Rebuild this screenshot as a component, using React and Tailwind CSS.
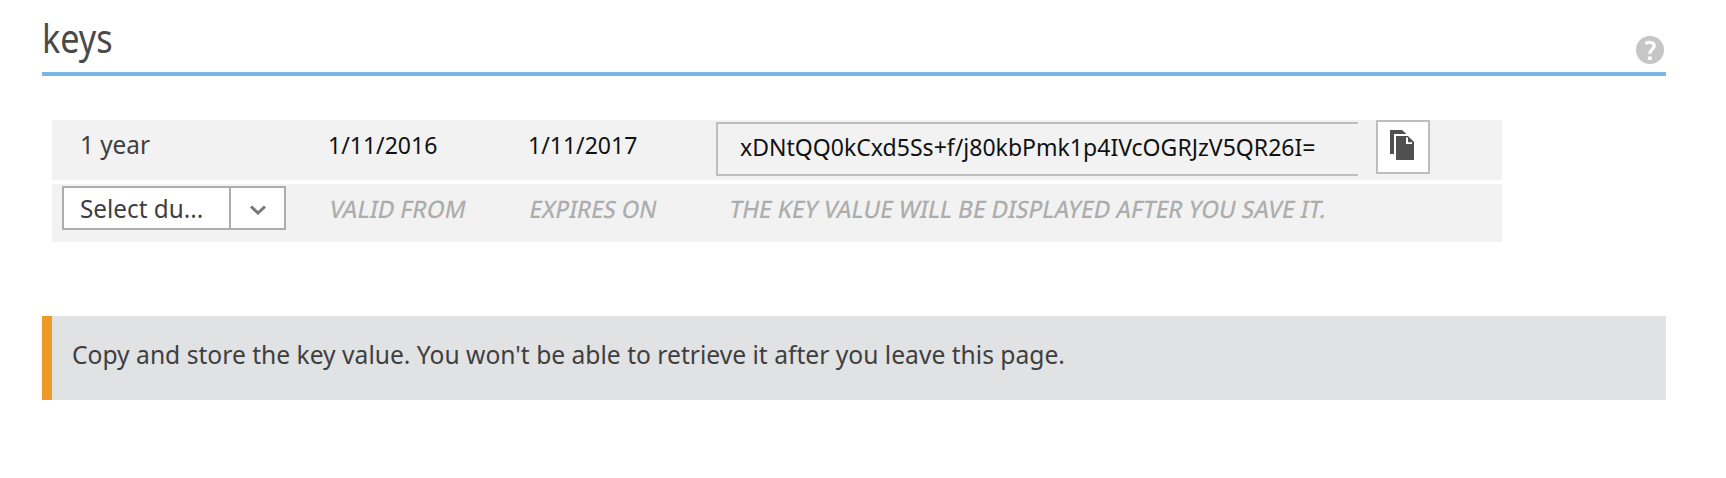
import React from "react";

const run = "block w-max origin-left whitespace-pre";

function CopyIcon() {
  return (
    <svg width="24" height="30" viewBox="0 0 24 30" fill="#505050">
      <path d="M0 0h12l4 3.500v.5H4v20H0z" />
      <path d="M6 6h12l6 6v18H6z" />
      <path d="M16 7.500v6.500h6v-1.700h-4V7.500z" fill="#fff" />
    </svg>
  );
}

function HelpIcon() {
  return (
    <svg width="28" height="28" viewBox="0 0 28 28" fill="none">
      <circle cx="14" cy="14" r="14" fill="#c6c6c6" />
      <path d="M9.3 7.6C12 6 18.2 5.6 18.2 9.8c0 3.600-4.400 3.600-4.400 8" stroke="#fff" strokeWidth="3.200" />
      <rect x="11.800" y="20.500" width="4" height="3.500" fill="#fff" />
    </svg>
  );
}

export default function App() {
  return (
    <main className="h-[478px] w-[1726px] overflow-hidden bg-white pl-[42px] pr-[60px] font-['Noto_Sans','Open_Sans',sans-serif] text-[#3f3f3f]">
      <header className="flex h-[76px] items-start justify-between border-b-4 border-[#7ab6e6]">
        <h1 className={`${run} mt-[10px] text-[40px] leading-[56px] font-normal text-[#4a4a4a] scale-x-[0.855]`}>keys</h1>
        <div className="mt-[36px] mr-[2px]"><HelpIcon /></div>
      </header>

      <section className="mt-[44px] ml-[10px] flex w-[1450px] flex-col gap-1">
        <div className="flex h-[60px] bg-[#f2f2f2]">
          <div className="w-[276px] pt-[6px] pl-[28px] text-[26px] leading-[36px]">
            <span className={`${run} scale-x-[0.935]`}>1 year</span>
          </div>
          <div className="w-[200px] pt-[7px] text-[24px] leading-[36px] text-[#111]">
            <span className={`${run} scale-x-[0.96]`}>1/11/2016</span>
          </div>
          <div className="w-[188px] pt-[7px] text-[24px] leading-[36px] text-[#111]">
            <span className={`${run} scale-x-[0.96]`}>1/11/2017</span>
          </div>
          <div className="mt-[2px] h-[54px] w-[642px] border-2 border-r-0 border-[#bebebe] pt-[5px] pl-[22px] text-[24px] leading-[36px] text-[#111]">
            <span className={`${run} scale-x-[0.96]`}>xDNtQQ0kCxd5Ss+f/j80kbPmk1p4IVcOGRJzV5QR26I=</span>
          </div>
          <button className="ml-[18px] flex h-[54px] w-[54px] items-start border-2 border-[#bebebe] bg-white pt-[8px] pl-[12px]" aria-label="Copy">
            <CopyIcon />
          </button>
        </div>

        <div className="flex h-[58px] bg-[#f2f2f2] text-[24px] leading-[36px] text-[#adadad]">
          <div className="w-[278px] pt-[2px] pl-[10px]">
            <div className="flex h-[44px] w-[224px] border-2 border-[#adadad] bg-white text-[26px] text-[#3f3f3f]">
              <div className="w-[167px] border-r-2 border-[#adadad] pt-[2px] pl-[16px]">
                <span className={`${run} scale-x-[0.935]`}>Select du...</span>
              </div>
              <div className="flex flex-1 items-center justify-center pt-[4px]">
                <svg width="16" height="10" viewBox="0 0 16 10" fill="none" stroke="#777" strokeWidth="3">
                  <path d="M1 1.500l7 6.500 7-6.500" />
                </svg>
              </div>
            </div>
          </div>
          <div className="w-[200px] pt-[7px] font-medium"><span className={`${run} scale-x-[0.95] -skew-x-12`}>VALID FROM</span></div>
          <div className="w-[200px] pt-[7px] font-medium"><span className={`${run} scale-x-[0.93] -skew-x-12`}>EXPIRES ON</span></div>
          <div className="pt-[7px] font-medium"><span className={`${run} scale-x-[0.944] -skew-x-12`}>THE KEY VALUE WILL BE DISPLAYED AFTER YOU SAVE IT.</span></div>
        </div>
      </section>

      <aside className="mt-[74px] h-[84px] border-l-10 border-[#ed9b26] bg-[#e1e2e4] pt-[20px] pl-[20px] text-[26px] leading-[36px]">
        <span className={`${run} scale-x-[0.947]`}>Copy and store the key value. You won't be able to retrieve it after you leave this page.</span>
      </aside>
    </main>
  );
}
